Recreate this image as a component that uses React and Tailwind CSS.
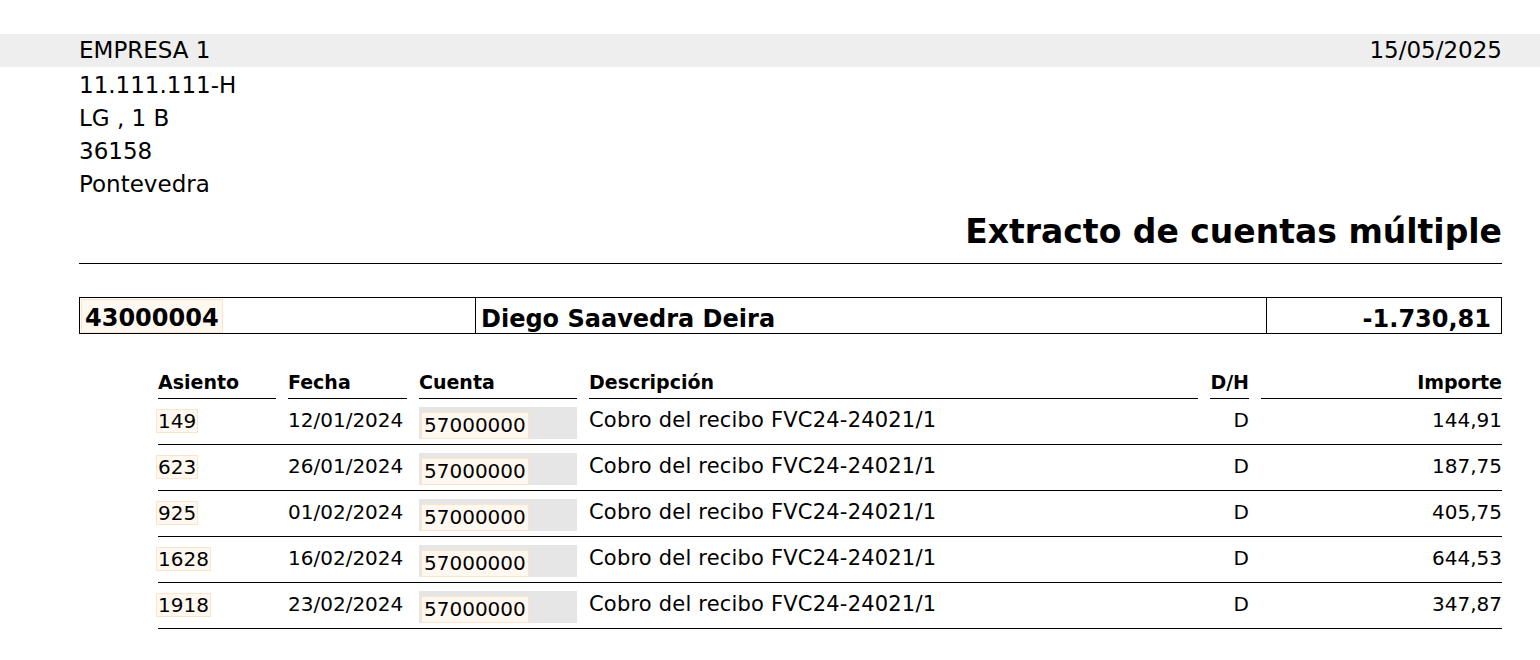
const rows = [
  { asiento: "149", fecha: "12/01/2024", cuenta: "57000000", desc: "Cobro del recibo FVC24-24021/1", dh: "D", importe: "144,91" },
  { asiento: "623", fecha: "26/01/2024", cuenta: "57000000", desc: "Cobro del recibo FVC24-24021/1", dh: "D", importe: "187,75" },
  { asiento: "925", fecha: "01/02/2024", cuenta: "57000000", desc: "Cobro del recibo FVC24-24021/1", dh: "D", importe: "405,75" },
  { asiento: "1628", fecha: "16/02/2024", cuenta: "57000000", desc: "Cobro del recibo FVC24-24021/1", dh: "D", importe: "644,53" },
  { asiento: "1918", fecha: "23/02/2024", cuenta: "57000000", desc: "Cobro del recibo FVC24-24021/1", dh: "D", importe: "347,87" },
];

const cols = "grid grid-cols-[118px_119px_158px_1fr_39px_241px] gap-x-[12px]";

export default function App() {
  return (
    <div className="min-h-screen w-full bg-white pt-[34px] text-black font-['DejaVu_Sans',sans-serif]">
      {/* Company band */}
      <div className="flex h-[33px] items-center justify-between bg-[#eeeeee] pl-[79px] pr-[38px] text-[23px]">
        <span>EMPRESA 1</span>
        <span>15/05/2025</span>
      </div>

      <div className="pl-[79px] pr-[38px]">
        {/* Address */}
        <div className="pt-[2px] text-[23px] leading-[33px]">
          <div>11.111.111-H</div>
          <div>LG , 1 B</div>
          <div>36158</div>
          <div>Pontevedra</div>
        </div>

        {/* Title */}
        <div className="mt-[11px] border-b border-black pb-[11px] text-right text-[33px] font-bold leading-[40px]">
          Extracto de cuentas múltiple
        </div>

        {/* Account box */}
        <div className="mt-[33px] grid grid-cols-[395px_791px_1fr] border border-black text-[24px] font-bold">
          <div className="h-[35px] pl-[1px]">
            <span className="mt-[1px] inline-block h-[34px] border border-[#fde3c8] bg-[#fff8f1] px-[3px] pt-[4px] leading-[28px]">
              43000004
            </span>
          </div>
          <div className="h-[35px] border-l border-black pl-[5px] pt-[7px] leading-[28px]">
            Diego Saavedra Deira
          </div>
          <div className="h-[35px] border-l border-black pr-[10px] pt-[7px] text-right leading-[28px]">
            -1.730,81
          </div>
        </div>

        {/* Movements */}
        <div className="ml-[79px] mt-[36px]">
          <div className={`${cols} text-[19px] font-bold leading-[24px]`}>
            <div className="border-b border-black pb-[4px]">Asiento</div>
            <div className="border-b border-black pb-[4px]">Fecha</div>
            <div className="border-b border-black pb-[4px]">Cuenta</div>
            <div className="border-b border-black pb-[4px]">Descripción</div>
            <div className="border-b border-black pb-[4px] text-right">D/H</div>
            <div className="border-b border-black pb-[4px] text-right">Importe</div>
          </div>

          {rows.map((r) => (
            <div key={r.asiento} className={`${cols} h-[46px] border-b border-black text-[20px]`}>
              <div className="pt-[7px]">
                <span className="-ml-[2px] inline-block border border-[#fde3c8] bg-[#fff8f1] px-[1px] leading-[22px]">
                  {r.asiento}
                </span>
              </div>
              <div className="pt-[10px] leading-[22px]">{r.fecha}</div>
              <div className="mt-[8px] h-[32px] bg-[#e6e6e6] pl-[2px] pt-[3px]">
                <span className="inline-block h-[27px] border border-[#fde3c8] bg-[#fff8f1] px-[2px] leading-[25px]">
                  {r.cuenta}
                </span>
              </div>
              <div className="pt-[10px] text-[21px] leading-[22px] tracking-[0.2px]">{r.desc}</div>
              <div className="pt-[10px] text-right leading-[22px]">{r.dh}</div>
              <div className="pt-[10px] text-right leading-[22px]">{r.importe}</div>
            </div>
          ))}
        </div>
      </div>
    </div>
  );
}
